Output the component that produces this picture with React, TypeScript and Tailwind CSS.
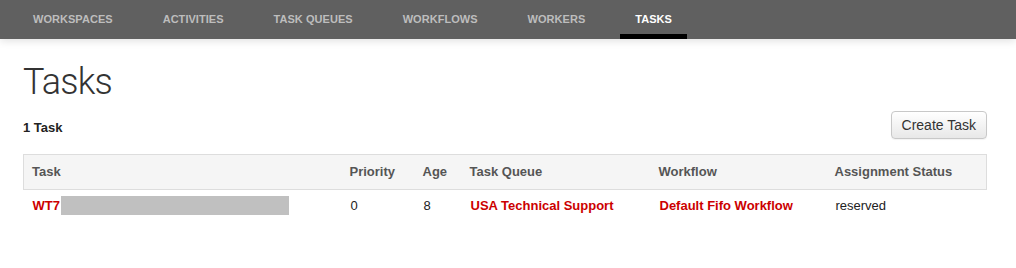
const navItems = ["WORKSPACES", "ACTIVITIES", "TASK QUEUES", "WORKFLOWS", "WORKERS", "TASKS"];

export default function App() {
  return (
    <div className="min-h-[268px] bg-white font-['Liberation_Sans',Arial,sans-serif] text-[#333]">
      {/* Top nav */}
      <nav className="relative flex h-[39px] gap-5 bg-[#606060] pl-[18px] shadow-[0_2px_8px_rgba(0,0,0,0.12)]">
        {navItems.map((item) => {
          const active = item === "TASKS";
          return (
            <a
              key={item}
              className={
                active
                  ? "flex h-full items-center border-b-[5px] border-black px-[15px] pt-[5px] text-[11px] font-bold tracking-[0.04px] text-white"
                  : "flex h-full items-center px-[15px] text-[11px] font-bold tracking-[0.04px] text-[#bdbdbd]"
              }
            >
              {item}
            </a>
          );
        })}
      </nav>

      <div className="pl-[23px] pr-[29px]">
        {/* Heading */}
        <h1 className="mt-[21px] font-['Roboto',sans-serif] text-[36px] leading-[44px] font-light tracking-[-0.8px] text-[#333]">
          Tasks
        </h1>

        {/* Count + action */}
        <div className="mt-[7px] flex items-center justify-between">
          <span className="pt-[6px] text-[13px] font-bold text-[#222]">1 Task</span>
          <button className="h-[28px] rounded-[4px] border border-[#c8c8c8] bg-linear-to-b from-white to-[#e8e8e8] px-[10px] text-[14px] text-[#333] shadow-[0_1px_1px_rgba(0,0,0,0.05)]">
            Create Task
          </button>
        </div>

        {/* Table */}
        <table className="mt-[15px] w-full table-fixed border-collapse text-[13px]">
          <colgroup>
            <col className="w-[318px]" />
            <col className="w-[73px]" />
            <col className="w-[47px]" />
            <col className="w-[189px]" />
            <col className="w-[176px]" />
            <col />
          </colgroup>
          <thead>
            <tr className="h-[35px] border border-[#ddd] bg-[#f5f5f5] text-left font-bold text-[#555]">
              <th className="px-2">Task</th>
              <th className="px-2">Priority</th>
              <th className="px-2">Age</th>
              <th className="px-2">Task Queue</th>
              <th className="px-2">Workflow</th>
              <th className="px-2">Assignment Status</th>
            </tr>
          </thead>
          <tbody>
            <tr className="h-[31px] text-left">
              <td className="px-[9px]">
                <div className="flex items-center">
                  <span className="font-bold text-[#cc0000]">WT7</span>
                  <span className="ml-[1px] h-[19px] w-[228px] bg-[#c0c0c0]" />
                </div>
              </td>
              <td className="px-[9px] text-[#222]">0</td>
              <td className="px-[9px] text-[#222]">8</td>
              <td className="px-[9px] font-bold text-[#cc0000]">USA Technical Support</td>
              <td className="px-[9px] font-bold text-[#cc0000]">Default Fifo Workflow</td>
              <td className="px-[9px] text-[#222]">reserved</td>
            </tr>
          </tbody>
        </table>
      </div>
    </div>
  );
}
